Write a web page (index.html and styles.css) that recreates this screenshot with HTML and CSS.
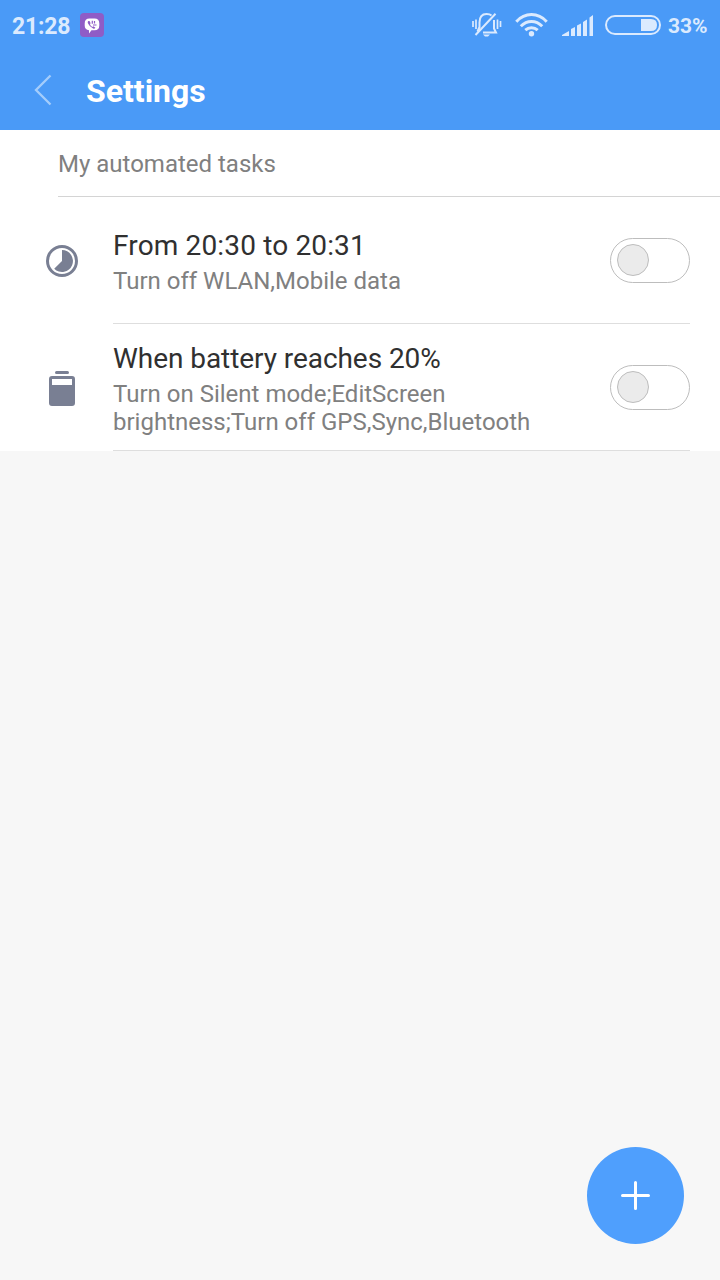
FILE: index.html
```
<!DOCTYPE html>
<html lang="en">
<head>
    <meta charset="UTF-8">
    <meta name="viewport" content="width=device-width, initial-scale=1.0">
    <title>Settings</title>
    <link rel="stylesheet" href="styles.css">
</head>
<body>
    <header class="header">
        <div class="status-bar">
            <span class="time">21:28</span>
            <svg class="app-icon" width="24" height="24" viewBox="0 0 24 24">
                <rect width="24" height="24" rx="4" fill="#8f5cc6"/>
                <path d="M9.500 5.500h5q4.800 0 4.800 5v2q0 4.800-4.800 4.800h-3L9 20.500V17.300q-4.300-.5-4.300-4.800v-2q0-5 4.800-5z" fill="#fff"/>
                <path d="M8.300 8q-1 .8-.4 2.300 1.600 3.700 5.200 5.200 1.400.5 2.300-.8l-2-1.500-1 .8q-2-1-2.500-3l.8-.8-1.200-2.200z" fill="#8f5cc6"/>
                <path d="M12.300 7.800v3M14.500 8v2.500M13 12h3.500" fill="none" stroke="#8f5cc6" stroke-width="1.200"/>
            </svg>
            <div class="status-icons">
                <svg class="bell" width="30" height="24" viewBox="0 0 30 24" fill="none" stroke="#dbeafe" stroke-width="2">
                    <path d="M7.500 15V9.500Q7.500 1 14.500 1q3.500 0 5 1.500M22 7v8.500l2 4H11M7.500 14l-2 4.500M3.500 22L23.500 .7"/>
                    <path d="M1 8v6M4 6.500v9.500M25.500 6.500v9.500M28.500 8v6" stroke-width="1.700"/>
                    <path d="M11 21.500h7l-2 2h-3z" fill="#dbeafe" stroke="none"/>
                </svg>
                <svg class="wifi" width="33" height="24" viewBox="0.500 0 33 24" fill="none" stroke="#dbeafe" stroke-width="3">
                    <path d="M1.800 8.700Q8.300 1.600 17 1.600t15.200 7.100M6.300 13.200Q11 8.400 17 8.400t10.700 4.800M10.800 17.200Q13.500 14.700 17 14.700t6.200 2.500"/>
                    <circle cx="17" cy="20.700" r="2.700" fill="#dbeafe" stroke="none"/>
                </svg>
                <svg class="signal" width="32" height="22" viewBox="0 0 32 22" fill="#dbeafe">
                    <path d="M0 22v-1l7-4v5zM9 15l4-2v9H9zM15 11.500l4-2V22h-4zM21 8l4-2.500V22h-4zM27.500 3.500L31 1v21h-3.500z"/>
                </svg>
                <svg class="battery" width="56" height="20" viewBox="0 0 56 20">
                    <rect x="1" y="1" width="54" height="18" rx="9" fill="none" stroke="#dbeafe" stroke-width="2"/>
                    <path d="M36 4h10q6 0 6 6t-6 6H36z" fill="#dbeafe"/>
                </svg>
                <span class="percent">33%</span>
            </div>
        </div>
        <div class="title-bar">
            <svg class="back" width="18" height="32" viewBox="0 0 18 32" fill="none" stroke="#a4cdfb" stroke-width="2.300">
                <path d="M16.500 1.500L2 16l14.500 14.500"/>
            </svg>
            <h1>Settings</h1>
        </div>
    </header>

    <main class="tasks">
        <h2>My automated tasks</h2>
        <div class="task">
            <svg class="task-icon" width="32" height="32" viewBox="0 0 32 32">
                <circle cx="16" cy="16" r="14.500" fill="none" stroke="#797f93" stroke-width="3"/>
                <path d="M16 16V5A11 11 0 1 1 8.200 23.800z" fill="#797f93"/>
            </svg>
            <div class="task-body">
                <div class="task-text">
                    <h3 class="wide">From 20:30 to 20:31</h3>
                    <p>Turn off WLAN,Mobile data</p>
                </div>
                <div class="switch"><div class="knob"></div></div>
            </div>
        </div>
        <div class="task">
            <svg class="task-icon" width="32" height="38" viewBox="0 -2 32 38">
                <rect x="9" y="0" width="14" height="3" rx="1.500" fill="#797f93"/>
                <path d="M6 5h20q3 0 3 3v24q0 3-3 3H6q-3 0-3-3V8q0-3 3-3zM6 8v6h20V8z" fill="#797f93" fill-rule="evenodd"/>
            </svg>
            <div class="task-body">
                <div class="task-text">
                    <h3>When battery reaches 20%</h3>
                    <p>Turn on Silent mode;EditScreen brightness;Turn off GPS,Sync,Bluetooth</p>
                </div>
                <div class="switch"><div class="knob"></div></div>
            </div>
        </div>
    </main>

    <button class="add-btn">
        <svg width="29" height="29" viewBox="0 0 29 29" fill="none" stroke="#fff" stroke-width="3" stroke-linecap="round">
            <path d="M14.500 1.500v26M1.500 14.500h26"/>
        </svg>
    </button>
</body>
</html>
```
FILE: styles.css
```
* {
    margin: 0;
    padding: 0;
    box-sizing: border-box;
    font-family: Roboto, sans-serif;
}

body {
    background: #f7f7f7;
    min-height: 100vh;
}

svg {
    display: block;
    flex-shrink: 0;
}

.header {
    height: 130px;
    background: #4a9af7;
}

.status-bar {
    display: flex;
    align-items: center;
    height: 50px;
    padding: 0 12px;
    color: #dbeafe;
}

.time {
    width: 68px;
    padding-top: 2px;
    font-size: 23px;
    font-weight: 700;
    letter-spacing: -0.2px;
}

.status-icons {
    display: flex;
    align-items: center;
    margin-left: auto;
}

.wifi {
    margin-left: 13px;
}

.signal {
    margin-left: 14px;
}

.battery {
    margin-left: 11px;
}

.percent {
    width: 40px;
    margin-left: 7px;
    padding-top: 2px;
    font-size: 21px;
    font-weight: 700;
}

.title-bar {
    display: flex;
    align-items: center;
    height: 80px;
    padding-left: 34px;
}

.title-bar h1 {
    margin-left: 34px;
    padding-top: 2px;
    color: #fff;
    font-size: 32px;
    font-weight: 700;
}

.tasks {
    background: #fff;
}

.tasks h2 {
    height: 67px;
    margin-left: 58px;
    border-bottom: 1px solid #d4d4d4;
    color: #808080;
    font-size: 24px;
    font-weight: 400;
    line-height: 69px;
}

.task {
    display: flex;
    align-items: center;
    height: 127px;
    padding: 0 30px 0 46px;
}

.task-body {
    display: flex;
    flex: 1;
    align-items: center;
    justify-content: space-between;
    height: 127px;
    margin-left: 35px;
    border-bottom: 1px solid #dedede;
}

.task-text {
    width: 440px;
}

.task-text h3 {
    color: #303030;
    font-size: 28px;
    font-weight: 400;
    letter-spacing: -0.06px;
    line-height: 44px;
}

.task-text .wide {
    letter-spacing: 0.15px;
}

.task-text p {
    margin: -1px 0 1px;
    color: #808080;
    font-size: 24px;
    line-height: 28px;
}

.switch {
    width: 80px;
    height: 45px;
    padding: 5px 6px;
    border: 1px solid #bdbdbd;
    border-radius: 23px;
}

.knob {
    width: 32px;
    height: 32px;
    background: #ebebeb;
    border: 1px solid #bdbdbd;
    border-radius: 50%;
}

.add-btn {
    position: fixed;
    right: 36px;
    bottom: 36px;
    display: flex;
    align-items: center;
    justify-content: center;
    width: 97px;
    height: 97px;
    background: #4f9ffd;
    border: none;
    border-radius: 50%;
}
```
